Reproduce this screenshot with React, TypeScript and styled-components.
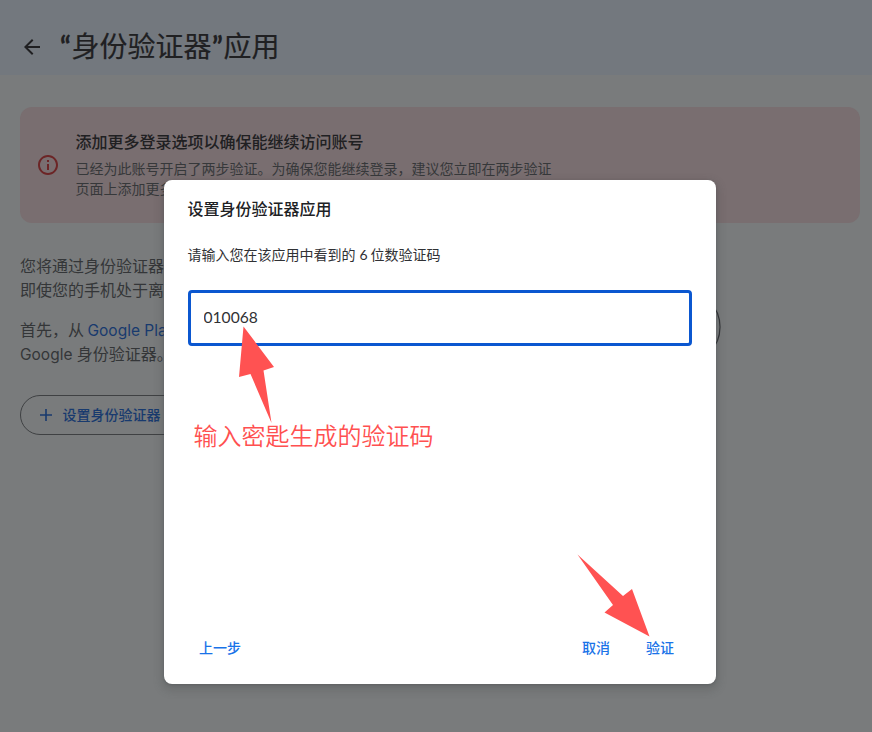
import React from "react";
import styled, { createGlobalStyle } from "styled-components";

const Global = createGlobalStyle`
  * { box-sizing: border-box; }
  body {
    margin: 0;
    background: #797b7c;
    color: #202022;
    font-family: Inter, "Noto Sans CJK SC", sans-serif;
    overflow: hidden;
  }
`;

const Page = styled.div`
  position: relative;
  width: 872px;
  height: 732px;
  overflow: hidden;
  background: #797b7c;
`;

const Header = styled.header`
  display: flex;
  align-items: center;
  height: 75px;
  padding: 19px 20px 0;
  gap: 16px;
  background: #73787e;
`;

const Title = styled.h1`
  margin: -3px 0 0 -0.5px;
  font: 400 28px/36px "Noto Sans CJK SC", sans-serif;
  white-space: nowrap;
  color: #202022;
  -webkit-text-stroke: 0.2px #202022;
`;

const Quote = styled.span`
  display: inline-block;
  width: 12px;
  text-align: center;
  font-family: Lato, sans-serif;
  font-weight: 700;
`;

const Banner = styled.section`
  display: flex;
  align-items: center;
  gap: 16px;
  height: 116px;
  margin: 32px 12px 0 20px;
  padding: 0 16px;
  border-radius: 12px;
  background: #796e70;
`;

const BannerCopy = styled.div`
  margin: -1px 0 0 -0.5px;
`;

const BannerTitle = styled.h2`
  margin: -1px 0 5px;
  font-size: 16px;
  line-height: 24px;
  font-weight: 500;
`;

const BannerText = styled.p`
  margin: 0;
  font-size: 14px;
  line-height: 20px;
  color: #36383a;
`;

const Body = styled.main`
  padding: 31px 20px 0;
`;

const Paragraph = styled.p`
  margin: 0 0 16px;
  font-size: 16px;
  line-height: 24px;
  color: #343638;
  white-space: nowrap;
`;

const Columns = styled.div`
  display: flex;
  justify-content: space-between;
  width: 701px;
  height: 112px;
`;

const Latin = styled.span`
  font-family: Inter, sans-serif;
  font-size: 15.5px;
  line-height: 1;
`;

const StoreLink = styled.a`
  margin-left: -1px;
  color: #183a6e;
  font-size: 15.5px;
  line-height: 1;
`;

const Digit = styled.span`
  font-family: Lato, sans-serif;
  letter-spacing: -0.9px;
  line-height: 1;
`;

const DeviceArt = styled.svg`
  flex: none;
  width: 76px;
  height: 76px;
  margin-top: 35px;
`;

const SetupButton = styled.button`
  display: flex;
  align-items: center;
  gap: 7.5px;
  height: 40px;
  margin-top: 29px;
  padding: 0 24px 0 16px;
  border: 1px solid #3f4143;
  border-radius: 20px;
  background: transparent;
  color: #183a6e;
  font: 500 14px/20px Inter, "Noto Sans CJK SC", sans-serif;
`;

const Dialog = styled.div`
  position: absolute;
  left: 164px;
  top: 180px;
  width: 552px;
  height: 504px;
  display: flex;
  flex-direction: column;
  padding: 17px 24px 17px;
  border-radius: 8px;
  background: #fff;
  box-shadow: 0 1px 3px rgba(60, 64, 67, 0.3),
    0 4px 8px 3px rgba(60, 64, 67, 0.2);
`;

const DialogTitle = styled.h2`
  margin: 0 0 0 -0.5px;
  font-size: 16px;
  line-height: 24px;
  font-weight: 500;
  color: #202124;
`;

const Prompt = styled.p`
  margin: 24px 0 25px -0.5px;
  font-size: 14px;
  line-height: 20px;
  color: #303134;
`;

const CodeInput = styled.input`
  width: 504px;
  height: 56px;
  padding: 0 12.5px 2px;
  border: 3px solid #0b57d0;
  border-radius: 4px;
  outline: none;
  color: #303134;
  font: 400 15.6px/24px Lato, sans-serif;
`;

const Actions = styled.footer`
  display: flex;
  align-items: center;
  height: 40px;
  margin-top: auto;
  padding: 0 7px 0 0;
`;

const TextButton = styled.button<{ $push?: boolean }>`
  height: 36px;
  padding: 0 11px;
  margin: 0;
  margin-right: ${(p) => (p.$push ? "auto" : "0")};
  border: 0;
  background: transparent;
  color: #1a73e8;
  font: 500 14px/20px "Noto Sans CJK SC", sans-serif;
  white-space: nowrap;

  & + & + & {
    margin-left: 14px;
  }
`;

const Annotations = styled.svg`
  position: absolute;
  inset: 0;
  width: 872px;
  height: 732px;
  pointer-events: none;
`;

const Note = styled.div`
  position: absolute;
  left: 193.5px;
  top: 417px;
  color: #ff5050;
  font: 350 24px/36px "Noto Sans CJK SC", sans-serif;
  white-space: nowrap;
`;

export default function App() {
  return (
    <Page>
      <Global />
      <Header>
        <svg width="24" height="24" viewBox="0 0 24 24" fill="#202022">
          <path d="M20 11H7.83l5.59-5.59L12 4l-8 8 8 8 1.41-1.41L7.83 13H20v-2z" />
        </svg>
        <Title>
          <Quote>“</Quote>身份验证器<Quote>”</Quote>应用
        </Title>
      </Header>
      <Banner>
        <svg width="24" height="24" viewBox="0 0 24 24" fill="#6c2526">
          <path d="M11 7h2v2h-2zm0 4h2v6h-2zm1-9C6.48 2 2 6.48 2 12s4.48 10 10 10 10-4.48 10-10S17.52 2 12 2zm0 18c-4.41 0-8-3.59-8-8s3.59-8 8-8 8 3.59 8 8-3.59 8-8 8z" />
        </svg>
        <BannerCopy>
          <BannerTitle>添加更多登录选项以确保能继续访问账号</BannerTitle>
          <BannerText>
            已经为此账号开启了两步验证。为确保您能继续登录，建议您立即在两步验证
            <br />
            页面上添加更多
          </BannerText>
        </BannerCopy>
      </Banner>
      <Body>
        <Columns>
          <div>
            <Paragraph>
              您将通过身份验证器
              <br />
              即使您的手机处于离
            </Paragraph>
            <Paragraph>
              首先，从 <StoreLink>Google Play</StoreLink>
              <br />
              <Latin>Google </Latin>身份验证器。
            </Paragraph>
          </div>
          <DeviceArt viewBox="0 0 76 76">
            <circle cx="38" cy="38" r="37" fill="none" stroke="#303235" strokeWidth="1.2" />
          </DeviceArt>
        </Columns>
        <SetupButton>
          <svg width="18" height="18" viewBox="0 0 18 18" fill="none" stroke="#183a6e" strokeWidth="1.6">
            <path d="M9 3v12M3 9h12" />
          </svg>
          设置身份验证器
        </SetupButton>
      </Body>
      <Dialog role="dialog">
        <DialogTitle>设置身份验证器应用</DialogTitle>
        <Prompt>
          请输入您在该应用中看到的 <Digit>6</Digit> 位数验证码
        </Prompt>
        <CodeInput defaultValue="010068" />
        <Actions>
          <TextButton $push>上一步</TextButton>
          <TextButton>取消</TextButton>
          <TextButton>验证</TextButton>
        </Actions>
      </Dialog>
      <Note>输入密匙生成的验证码</Note>
      <Annotations viewBox="0 0 872 732" fill="#ff5252">
        <path d="M243.5 326.5L274 367L263.5 370.5L271.5 423L250.5 374L239 377Z" />
        <path d="M577.5 554.5L623 596L632 589L649.5 636.5L604.5 612.5L613 605Z" />
      </Annotations>
    </Page>
  );
}
